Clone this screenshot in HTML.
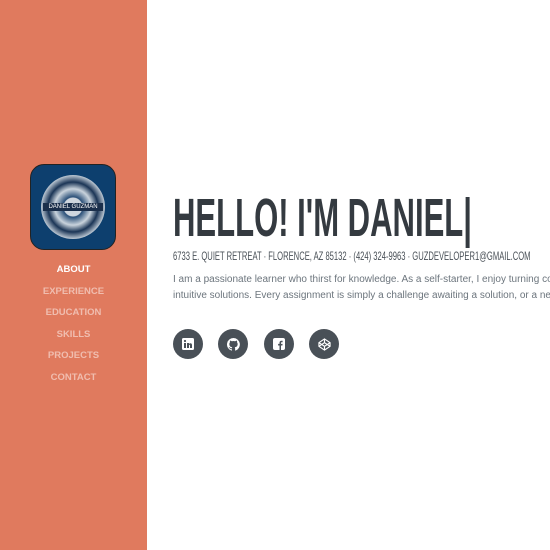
<!DOCTYPE html>
<html><head><style>
body{margin:0;width:550px;height:550px;overflow:hidden;background:#fff;font-family:"Liberation Sans",sans-serif;position:relative}
.side{position:absolute;left:0;top:0;width:147px;height:550px;background:#e07a5e}
.logo{position:absolute;left:30px;top:164px;width:84px;height:84px;border-radius:14px;background:#0d3f6e;border:1px solid #222}
.logo .c{position:absolute;left:10px;top:10px;width:64px;height:64px;border-radius:50%;background:radial-gradient(circle,#cfd6de 0 20%,#2a4f78 22%,#c9d3dc 40%,#1b3556 55%,#b7c3cf 70%,#24466d 85%)}
.logo .b{position:absolute;left:12px;top:38px;width:60px;height:8px;background:#1b2f4b;color:#fff;font-size:6px;text-align:center;line-height:8px}
.nav{position:absolute;top:264px;left:0;width:147px;text-align:center;font-weight:bold;font-size:9.5px}
.nav div{height:21.5px;color:rgba(255,255,255,.5)}
.nav div.a{color:#fff}
h1{position:absolute;left:173px;top:188px;margin:0;font-size:54px;line-height:60px;color:#343a40;white-space:nowrap;transform:scaleX(.575);transform-origin:left;font-weight:bold}
.addr{position:absolute;left:173px;top:249px;font-size:12px;color:#495057;white-space:nowrap;transform:scaleX(.635);transform-origin:left}
.pw{position:absolute;left:173px;top:272px;width:377px;overflow:hidden}
p{margin:0;font-size:10px;line-height:16px;color:#6c757d;white-space:nowrap}
.ic{position:absolute;top:329px;width:30px;height:30px;border-radius:50%;background:#495057;display:flex;align-items:center;justify-content:center}
</style></head><body>
<div class="side">
<div class="logo"><div class="c"></div><div class="b">DANIEL GUZMAN</div></div>
<div class="nav"><div class="a">ABOUT</div><div>EXPERIENCE</div><div>EDUCATION</div><div>SKILLS</div><div>PROJECTS</div><div>CONTACT</div></div>
</div>
<h1>HELLO! I'M DANIEL|</h1>
<div class="addr">6733 E. QUIET RETREAT · FLORENCE, AZ 85132 · (424) 324-9963 · GUZDEVELOPER1@GMAIL.COM</div>
<div class="pw"><p>I am a passionate learner who thirst for knowledge. As a self-starter, I enjoy turning complex problems into<br>intuitive solutions. Every assignment is simply a challenge awaiting a solution, or a new</p></div>
<div class="ic" style="left:173px"><svg width="12" height="12" viewBox="0 0 12 12"><rect width="12" height="12" rx="1.5" fill="#fff"/><rect x="2" y="5" width="2" height="5" fill="#495057"/><circle cx="3" cy="3" r="1.1" fill="#495057"/><path d="M5 5h2v1c.5-1 3-1.3 3 1v3H8V7.5c0-1-1-1-1 0V10H5z" fill="#495057"/></svg></div>
<div class="ic" style="left:218px"><svg width="13" height="13" viewBox="0 0 16 16"><path fill="#fff" d="M8 0a8 8 0 0 0-2.5 15.6c.4 0 .5-.2.5-.4v-1.5c-2.2.5-2.7-1-2.7-1-.4-.9-.9-1.2-.9-1.2-.7-.5.1-.5.1-.5.8.1 1.2.8 1.2.8.7 1.3 1.9.9 2.3.7.1-.5.3-.9.5-1.1-1.8-.2-3.6-.9-3.6-4 0-.9.3-1.6.8-2.1-.1-.2-.4-1 .1-2.1 0 0 .7-.2 2.2.8a7.5 7.5 0 0 1 4 0c1.5-1 2.2-.8 2.2-.8.4 1.1.2 1.9.1 2.1.5.6.8 1.3.8 2.1 0 3.1-1.9 3.8-3.6 4 .3.3.5.8.5 1.5v2.2c0 .2.1.5.6.4A8 8 0 0 0 8 0z"/></svg></div>
<div class="ic" style="left:264px"><svg width="12" height="12" viewBox="0 0 12 12"><rect width="12" height="12" rx="2" fill="#fff"/><path d="M8 12V7.5h1.4l.2-1.6H8V5c0-.5.2-.8.8-.8h.8V2.8C9.4 2.7 9 2.7 8.5 2.7 7.3 2.7 6.5 3.4 6.5 4.8v1.1H5.1v1.6h1.4V12z" fill="#495057"/></svg></div>
<div class="ic" style="left:309px"><svg width="13" height="13" viewBox="0 0 14 14" fill="none" stroke="#fff" stroke-width="1.2"><path d="M7 1L13 5V9L7 13L1 9V5Z"/><path d="M7 1V5M7 9V13M1 5L7 9L13 5M1 9L7 5L13 9"/></svg></div>
</body></html>
